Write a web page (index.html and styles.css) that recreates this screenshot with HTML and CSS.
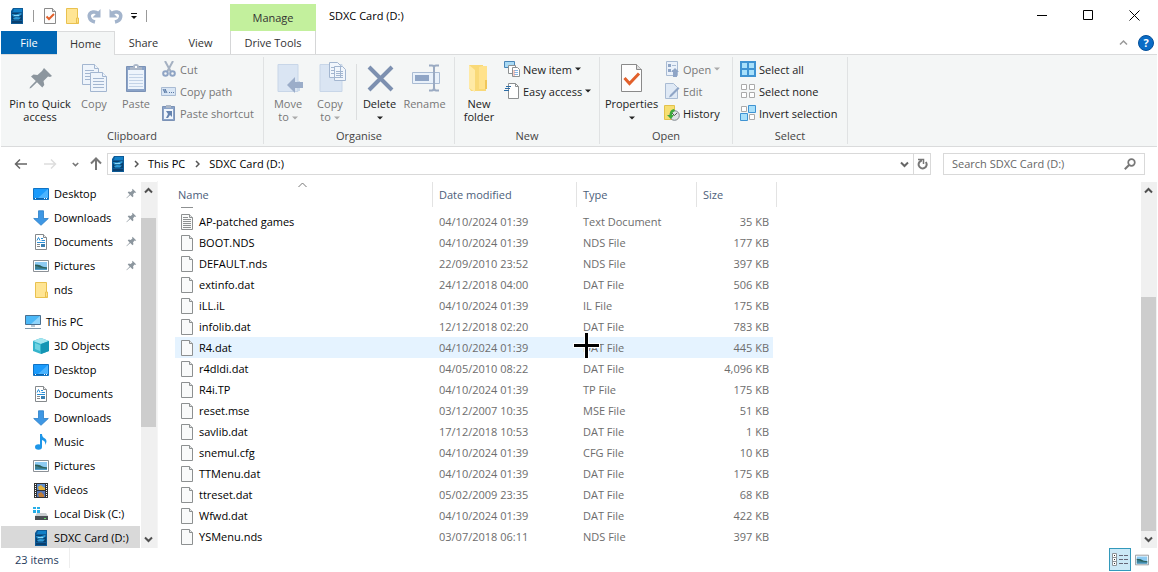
FILE: index.html
```html
<!DOCTYPE html>
<html lang="en">
<head>
  <meta charset="UTF-8" />
  <meta name="viewport" content="width=device-width, initial-scale=1.0"/>
  <title>SDXC Card (D:)</title>
  <link rel="stylesheet" href="styles.css">
</head>

<body>
  <!-- Icons used more than once -->
  <svg class="sprite" aria-hidden="true">
    <symbol id="i-sd" viewBox="0 0 16 16">
      <path d="M4 0h10v16H2V3z" fill="#0d5a96"/>
      <path d="M5 1h8v3H4z" fill="#1180c8"/>
      <path d="M3 5h10v7H3z" fill="#07406f"/>
      <path d="M3 6l4 .5L12 5l1 1-3 2.500H4zM4 10l3-1 5 .5-2 2H5z" fill="#2f9bd8"/>
      <path d="M5 7h5v1H5z" fill="#8bd8fa"/>
      <path d="M3 13h10v2H3z" fill="#0a3f6e"/>
    </symbol>
    <symbol id="i-folder" viewBox="0 0 16 16">
      <path d="M2.500.5h11v11h1v4h-12z" fill="#ffe594" stroke="#e9c14f"/>
      <path d="M12.500 15v-5h2v5z" fill="#ffe08a" stroke="#e9c14f"/>
    </symbol>
    <symbol id="i-check" viewBox="0 0 16 16">
      <path d="M2.500.5h8l3 3v12h-11z" fill="#fcfcfc" stroke="#8a8a8a"/>
      <path d="M10.500.5v3h3" fill="#ddd" stroke="#8a8a8a"/>
      <path d="M4.500 8.500l2.500 2.500 5-5" fill="none" stroke="#e2602b" stroke-width="2"/>
    </symbol>
    <symbol id="i-pin" viewBox="0 0 16 16">
      <path d="M9.500 1l5.500 5.500-1.500.5-1-.3-2.200 2.500.5 2.800-1.300 1.500-3.300-3.300L1 15l-.5-.5L5.300 9.300 2.500 6.500 4 5.200l2.800.5 2.500-2.200L9 2.300z" fill="#8c969e"/>
    </symbol>
    <symbol id="i-desktop" viewBox="0 0 16 16">
      <path d="M.5 2.500h15v11H.5z" fill="#1a9bfc" stroke="#1073c4"/>
      <path d="M15 3v9L5 12z" fill="#4bb4ff"/>
      <path d="M1 12h14v1H1z" fill="#0d64ad"/>
      <path d="M2 12h1v1H2zM11 12h1v1h-1zM13 12h1v1h-1z" fill="#fff"/>
    </symbol>
    <symbol id="i-down" viewBox="0 0 16 16">
      <path d="M5.500.8h5v7.700h4.800L8 15.300.7 8.500h4.800z" fill="#3e97e4" stroke="#2a7dc8" stroke-width=".8"/>
    </symbol>
    <symbol id="i-docs" viewBox="0 0 16 16">
      <path d="M2.500.5h8l3 3v12h-11z" fill="#fff" stroke="#85898c"/>
      <path d="M10.500.5v3h3" fill="#eee" stroke="#85898c"/>
      <path d="M4 6.500L5.500 3.500 7 6.500M4 8.500h8M8.500 6.500H12M8 4.500h2" stroke="#2a8ed6" fill="none"/>
      <path d="M4 10.500h3M4 12.500h3" stroke="#85898c"/>
      <path d="M8 10h4v3H8z" fill="#3a7fb0"/>
    </symbol>
    <symbol id="i-pics" viewBox="0 0 16 16">
      <path d="M.5 2.500h15v11H.5z" fill="#fff" stroke="#8c9196"/>
      <path d="M2 4h12v8H2z" fill="#8ecbf2"/>
      <path d="M2 7q5-1 7 1.500l5 1V12H2z" fill="#3b7f94"/>
      <path d="M2 8q3 0 5 1.500l7 1V9.500L10 9l-4-2-4-.5z" fill="#2d5f58"/>
      <path d="M2 11h12v1H2z" fill="#4d9cca"/>
    </symbol>
    <symbol id="i-file" viewBox="0 0 16 18">
      <path d="M2.500 1.500h8l3 3v12h-11z" fill="#f9fafa" stroke="#8d9091"/>
      <path d="M10.500 1.500v3h3" fill="#e4e6e7" stroke="#8d9091"/>
    </symbol>
    <symbol id="i-up" viewBox="0 0 9 9">
      <path d="M1 6.500L4.500 3 8 6.500" fill="none" stroke="currentColor" stroke-width="2"/>
    </symbol>
    <symbol id="i-dn" viewBox="0 0 9 9">
      <path d="M1 2.500L4.500 6 8 2.500" fill="none" stroke="currentColor" stroke-width="2"/>
    </symbol>
    <symbol id="i-tri" viewBox="0 0 6 4"><path d="M0 .5h6L3 3.500z" fill="currentColor"/></symbol>
  </svg>

  <!-- Title bar -->
  <header class="titlebar">
    <div class="quick">
      <svg class="ico"><use href="#i-sd"/></svg>
      <span class="bar"></span>
      <button aria-label="Properties"><svg class="ico"><use href="#i-check"/></svg></button>
      <button aria-label="New folder"><svg class="ico"><use href="#i-folder"/></svg></button>
      <button aria-label="Redo"><svg class="ico" viewBox="0 0 16 16"><path d="M9 14C2.500 12.500 1 5 7 4q3-.5 5 1.500" fill="none" stroke="#a3b4cc" stroke-width="3.500"/><path d="M14.500 1v8.500H6.500z" fill="#a3b4cc"/></svg></button>
      <button aria-label="Undo"><svg class="ico" viewBox="0 0 16 16"><path d="M7 14C13.500 12.500 15 5 9 4Q6 3.500 4 5.500" fill="none" stroke="#a3b4cc" stroke-width="3.500"/><path d="M1.500 1v8.500h8z" fill="#a3b4cc"/></svg></button>
      <button aria-label="Customise Quick Access Toolbar"><svg width="8" height="8" viewBox="0 0 8 8"><path d="M1 1.500h6" stroke="#111"/><path d="M1 4h6L4 7z" fill="#111"/></svg></button>
      <span class="bar"></span>
    </div>
    <div class="manage">Manage</div>
    <h1>SDXC Card (D:)</h1>
    <div class="win">
      <button aria-label="Minimise"><svg width="11" height="11" viewBox="0 0 11 11"><path d="M0 5.500h10" stroke="#000"/></svg></button>
      <button aria-label="Maximise"><svg width="11" height="11" viewBox="0 0 11 11"><path d="M.5.5h9v9h-9z" fill="none" stroke="#000"/></svg></button>
      <button aria-label="Close"><svg width="11" height="11" viewBox="0 0 11 11"><path d="M.5.5l10 10M10.500.5l-10 10" stroke="#000"/></svg></button>
    </div>
  </header>

  <nav class="tabs">
    <button class="file">File</button>
    <button class="on">Home</button>
    <button>Share</button>
    <button>View</button>
    <button class="drive">Drive Tools</button>
    <div class="help">
      <button aria-label="Minimise the Ribbon"><svg width="9" height="9" viewBox="0 0 9 9"><path d="M1 6.500L4.500 3 8 6.500" fill="none" stroke="#999" stroke-width="1.500"/></svg></button>
      <button class="round" aria-label="Help">?</button>
    </div>
  </nav>

  <!-- Ribbon -->
  <section class="ribbon">
    <div class="group clipboard">
      <div class="tools">
        <button class="big pin"><svg viewBox="0 0 32 32"><path d="M20 6l8 8-2 1-2-.5-4.500 4.500.8 4-2 2.500-5.300-5.300L7 26l-1.500.5L6 25l5.800-6L7 14.500 9.500 12.500l4 .5L18 9z" fill="#8c969e"/></svg>Pin to Quick<br>access</button>
        <button class="big copy dim"><svg viewBox="0 0 32 32"><g fill="#eef4fb" stroke="#a3b6d0"><path d="M4.500 2.500h12l4 4v16h-16z"/><path d="M16.500 2.500v4h4M7 8.500h9M7 11.500h9M7 14.500h9M7 17.500h9"/><path d="M12.500 10.500h12l4 4v15h-16z"/><path d="M24.500 10.500v4h4M15 16.500h11M15 19.500h11M15 22.500h11M15 25.500h11"/></g></svg>Copy</button>
        <button class="big paste dim"><svg viewBox="0 0 32 32"><path d="M6.500 4.500h19v25h-19z" fill="#8aa3c8" stroke="#7b92b6"/><path d="M8 8h16v19H8z" fill="#edf4fc"/><path d="M9 12.500h14M9 15.500h14M9 18.500h14M9 21.500h14M9 24.500h14" stroke="#c3d3e7"/><path d="M10 8V5h3q0-3 3-3t3 3h3v3z" fill="#aab6c7"/><path d="M15 4h2v2h-2z" fill="#fff"/></svg>Paste</button>
        <div class="stack dim">
          <button><svg class="ico" viewBox="0 0 16 16"><path d="M4 0l6 11M12 0L6 11" stroke="#a5b1c2" stroke-width="2"/><circle cx="4.500" cy="12.500" r="2.300" fill="none" stroke="#8fa4c4" stroke-width="2"/><circle cx="11.500" cy="12.500" r="2.300" fill="none" stroke="#8fa4c4" stroke-width="2"/></svg>Cut</button>
          <button><svg class="ico" viewBox="0 0 16 16"><path d="M.5 4.500h14v8H.5z" fill="#d9e6f5" stroke="#a9bbd3"/><path d="M2 6l2 4V6l2 4M8 9.500h1M10 9.500h1M12 9.500h1" fill="none" stroke="#5878a4"/></svg>Copy path</button>
          <button><svg class="ico" viewBox="0 0 16 16"><path d="M1.500 1.500h12v14h-12z" fill="#8aa3c8" stroke="#7b92b6"/><path d="M3 4h9v10H3z" fill="#f1f6fc"/><path d="M5 0h5v3H5z" fill="#aab6c7"/><path d="M5 6h6v6L9 10l-2 3H5l2-4z" fill="#6684b0"/></svg>Paste shortcut</button>
        </div>
      </div>
      <h2>Clipboard</h2>
    </div>
    <div class="group organise">
      <div class="tools">
        <button class="big move dim"><svg viewBox="0 0 32 32"><path d="M6 2.500h20v27H6z" fill="#dae5f3" stroke="#c8d6e8"/><path d="M25 19h3v10h-3z" fill="#cbdaeb"/><path d="M15 23l8-8v5h8v6h-8v5z" fill="#9badc9"/></svg>Move<br><span>to <svg class="tri"><use href="#i-tri"/></svg></span></button>
        <button class="big copyto dim"><svg viewBox="0 0 32 32"><path d="M6 2.500h22v27H6z" fill="#dae5f3" stroke="#c8d6e8"/><g fill="#f1f6fc" stroke="#a3b6d0"><path d="M15.500.5h8l3 3v12h-11zM20.500 4.500h8l3 3v11h-11z"/><path d="M22 9.500h7M22 11.500h7M22 13.500h7M22 15.500h7M17 5.500h3M17 8.500h3M17 11.500h3"/></g></svg>Copy<br><span>to <svg class="tri"><use href="#i-tri"/></svg></span></button>
        <span class="sep"></span>
        <button class="big delete"><svg viewBox="0 0 32 32"><path d="M5 5l23 23M28 5L5 28" stroke="#7d90b0" stroke-width="4"/></svg>Delete<br><span><svg class="tri"><use href="#i-tri"/></svg></span></button>
        <button class="big rename dim"><svg viewBox="0 0 32 32"><path d="M3.500 10.500h27v11h-27z" fill="#e9f1fa" stroke="#a9bbd3"/><path d="M6 13h14v6H6z" fill="#8fa5c6"/><path d="M20 3.500h3q2 0 2 2v20q0 3-2 3h-3M30 3.500h-3q-2 0-2 2v20q0 3 2 3h3" fill="none" stroke="#9aaac2" stroke-width="2"/></svg>Rename</button>
      </div>
      <h2>Organise</h2>
    </div>
    <div class="group new">
      <div class="tools">
        <button class="big folder"><svg viewBox="0 0 32 32"><path d="M6 3h14v9l3 3v14H8l-2-3z" fill="#f9d978"/><path d="M19 4h5v23h-8V5z" fill="#ffe28c"/><path d="M6 3l6 5v22l-6-4z" fill="#ffeaa6"/><path d="M22 18h2v9h-2z" fill="#f0c65a"/></svg>New<br>folder</button>
        <div class="stack">
          <button><svg class="ico" viewBox="0 0 16 16"><path d="M.5.5h10v6H.5z" fill="#a9daf5" stroke="#4a86b8"/><path d="M4.500 4.500h7v8h-7z" fill="#fff" stroke="#8d9091"/><path d="M8.500 6.500h5l2 2v7h-7z" fill="#fff" stroke="#8d9091"/><path d="M10 9.500h4M10 11.500h4M10 13.500h4" stroke="#87b7e6"/><path d="M10 9v6" stroke="#ef9a8a"/></svg>New item <svg class="tri"><use href="#i-tri"/></svg></button>
          <button><svg class="ico" viewBox="0 0 16 16"><path d="M4.500.5h7l3 3v12h-10z" fill="#fff" stroke="#8d9091"/><path d="M11.500.5v3h3" fill="none" stroke="#8d9091"/><path d="M2 3.500h5M1 5.500h5M0 7.500h5" stroke="#2d6da6"/></svg>Easy access <svg class="tri"><use href="#i-tri"/></svg></button>
        </div>
      </div>
      <h2>New</h2>
    </div>
    <div class="group open">
      <div class="tools">
        <button class="big props"><svg viewBox="0 0 32 32"><path d="M5.500 2.500h15l5 5v22h-20z" fill="#fdfdfd" stroke="#8a8a8a"/><path d="M20.500 2.500v5h5" fill="#ddd" stroke="#8a8a8a"/><path d="M8.500 16l5 5.500 9.500-10" fill="none" stroke="#e2602b" stroke-width="3"/></svg>Properties<br><span><svg class="tri"><use href="#i-tri"/></svg></span></button>
        <div class="stack">
          <button class="dim"><svg class="ico" viewBox="0 0 16 16"><path d="M2.500.5h11v14h-11z" fill="#eaf1fa" stroke="#a9bbd3"/><path d="M4 3h3v3H4zM4 8h3v3H4z" fill="#8fa5c6"/><path d="M8 4.500h4M8 9.500h3" stroke="#a9bbd3"/><path d="M11 7l4 4h-2v5h-4v-5H7z" fill="#8fa5c6"/></svg>Open <svg class="tri"><use href="#i-tri"/></svg></button>
          <button class="dim"><svg class="ico" viewBox="0 0 16 16"><path d="M1.500.5h8l4 4v11h-12z" fill="#dfe9f5" stroke="#a9bbd3"/><path d="M14 4l1.500 1.500-8 8-2.500 1 1-2.500z" fill="#8fa5c6"/></svg>Edit</button>
          <button><svg class="ico" viewBox="0 0 16 16"><path d="M.5.5h10v14H.5z" fill="#f7df72" stroke="#e3c24c"/><circle cx="10.500" cy="10.500" r="4.800" fill="#dfe3e6" stroke="#7f868c"/><path d="M8 8l2.500 2.500L13 8" fill="none" stroke="#555"/><path d="M10 4Q5 5 6 10H3l4 4 3-4H8Q8 7 11 6z" fill="#3da93d"/></svg>History</button>
        </div>
      </div>
      <h2>Open</h2>
    </div>
    <div class="group select">
      <div class="tools">
        <div class="stack">
          <button><svg class="ico" viewBox="0 0 16 16"><path d="M1 1h14v14H1z" fill="#a8e0fb" stroke="#3f93d2" stroke-width="2"/><path d="M8 0v16M0 8h16" stroke="#3f93d2" stroke-width="2"/></svg>Select all</button>
          <button><svg class="ico" viewBox="0 0 16 16"><path d="M1.500 1.500h5v5h-5zM9.500 1.500h5v5h-5zM1.500 9.500h5v5h-5zM9.500 9.500h5v5h-5z" fill="#fff" stroke="#aaa"/></svg>Select none</button>
          <button><svg class="ico" viewBox="0 0 16 16"><path d="M1.500 1.500h5v5h-5zM9.500 9.500h5v5h-5z" fill="#fff" stroke="#aaa"/><path d="M8.500.5h7v7h-7zM.5 8.500h7v7h-7z" fill="#a8e0fb" stroke="#3f93d2"/></svg>Invert selection</button>
        </div>
      </div>
      <h2>Select</h2>
    </div>
  </section>

  <!-- Address bar -->
  <div class="address">
    <div class="arrows">
      <button aria-label="Back"><svg width="14" height="12" viewBox="0 0 14 12"><path d="M6 1.500L1.500 6 6 10.500M2 6h11" fill="none" stroke="#666" stroke-width="1.500"/></svg></button>
      <button aria-label="Forward"><svg width="14" height="12" viewBox="0 0 14 12"><path d="M8 1.500l4.500 4.500L8 10.500M12 6H1" fill="none" stroke="#ddd" stroke-width="1.500"/></svg></button>
      <button class="recent" aria-label="Recent locations"><svg width="7" height="7"><use href="#i-dn"/></svg></button>
      <button aria-label="Up"><svg width="12" height="14" viewBox="0 0 12 14"><path d="M1 6.500L6 1.500l5 5M6 2v11" fill="none" stroke="#777" stroke-width="2"/></svg></button>
    </div>
    <div class="path">
      <svg class="ico"><use href="#i-sd"/></svg>
      <svg class="chev" viewBox="0 0 5 8"><path d="M1 1l3 3-3 3" fill="none" stroke="#555" stroke-width="1.500"/></svg>
      <a href="#">This PC</a>
      <svg class="chev" viewBox="0 0 5 8"><path d="M1 1l3 3-3 3" fill="none" stroke="#555" stroke-width="1.500"/></svg>
      <a href="#">SDXC Card (D:)</a>
      <button class="drop" aria-label="Previous locations"><svg width="9" height="9"><use href="#i-dn"/></svg></button>
      <button class="refresh" aria-label="Refresh"><svg width="11" height="12" viewBox="0 0 11 12"><path d="M8.800 4A4 4 0 1 1 5 2.500" fill="none" stroke="#777" stroke-width="2"/><path d="M1 1.500h5.500V6" fill="none" stroke="#777" stroke-width="1.500"/></svg></button>
    </div>
    <div class="search">
      <input type="search" placeholder="Search SDXC Card (D:)" aria-label="Search SDXC Card (D:)">
      <svg width="12" height="12" viewBox="0 0 12 12"><circle cx="7.500" cy="4.500" r="3.300" fill="none" stroke="#777" stroke-width="1.700"/><path d="M5 7L.8 11.200" stroke="#777" stroke-width="2"/></svg>
    </div>
  </div>

  <main>
    <nav class="tree">
      <a href="#"><svg class="ico"><use href="#i-desktop"/></svg>Desktop<svg class="pinned"><use href="#i-pin"/></svg></a>
      <a href="#"><svg class="ico"><use href="#i-down"/></svg>Downloads<svg class="pinned"><use href="#i-pin"/></svg></a>
      <a href="#"><svg class="ico"><use href="#i-docs"/></svg>Documents<svg class="pinned"><use href="#i-pin"/></svg></a>
      <a href="#"><svg class="ico"><use href="#i-pics"/></svg>Pictures<svg class="pinned"><use href="#i-pin"/></svg></a>
      <a href="#"><svg class="ico"><use href="#i-folder"/></svg>nds</a>
      <a href="#" class="pc"><svg class="ico" viewBox="0 0 16 16"><path d="M.5 1.500h15v9H.5z" fill="#4bb8f7" stroke="#4a6f8f"/><path d="M15 2v8H6z" fill="#8fd4fb"/><path d="M6 11h4v2H6z" fill="#b8c8d4"/><path d="M0 14.500h16" stroke="#7f98ab"/></svg>This PC</a>
      <a href="#"><svg class="ico" viewBox="0 0 16 16"><path d="M0 3l8-3 8 3v10l-8 3-8-3z" fill="#35b4cc"/><path d="M0 3l8-3 8 3-8 3z" fill="#a5e6f0"/><path d="M8 6l8-3v10l-8 3z" fill="#1595b4"/><path d="M2 5l5 2v6l-5-2z" fill="#6fd3e2"/></svg>3D Objects</a>
      <a href="#"><svg class="ico"><use href="#i-desktop"/></svg>Desktop</a>
      <a href="#"><svg class="ico"><use href="#i-docs"/></svg>Documents</a>
      <a href="#"><svg class="ico"><use href="#i-down"/></svg>Downloads</a>
      <a href="#"><svg class="ico" viewBox="0 0 16 16"><ellipse cx="5.500" cy="13" rx="3.500" ry="2.700" fill="#1e96e8"/><path d="M7 0h2q0 3 3 4.500 3 2 0 6.500 1-4-3-5v7H7z" fill="#1e96e8"/></svg>Music</a>
      <a href="#"><svg class="ico"><use href="#i-pics"/></svg>Pictures</a>
      <a href="#"><svg class="ico" viewBox="0 0 16 16"><path d="M1 1h14v15H1z" fill="#333"/><path d="M4 2h8v6H4z" fill="#5e8fd0"/><path d="M4 9h8v6H4z" fill="#5577b8"/><path d="M5 5l3-2 2 2 2 1v2H6z" fill="#e3b23c"/><path d="M5 12l3-2 3 3v2H6z" fill="#c07c35"/><path d="M2.500 2v14M13.500 2v14" stroke="#fff" stroke-dasharray="1 1"/></svg>Videos</a>
      <a href="#"><svg class="ico" viewBox="0 0 16 16"><path d="M0 1h3v2H0zM4 1h3v2H4zM0 4h3v3H0zM4 4h3v3H4z" fill="#27aee8"/><path d="M4 7h9l2 3H2z" fill="#c9cdd0"/><path d="M2 10h13v4H2z" fill="#4a4f54"/><path d="M11 12h2v1h-2z" fill="#5fe05f"/></svg>Local Disk (C:)</a>
      <a href="#" class="here"><svg class="ico"><use href="#i-sd"/></svg>SDXC Card (D:)</a>
    </nav>
    <div class="scroll left">
      <svg><use href="#i-up"/></svg><div class="thumb"></div><svg><use href="#i-dn"/></svg>
    </div>

    <div class="files">
      <table>
        <thead>
          <tr><th class="name">Name<svg class="sort" width="9" height="6" viewBox="0 0 9 6"><path d="M.5 5l4-4 4 4" fill="none" stroke="#777"/></svg></th><th class="date">Date modified</th><th class="type">Type</th><th class="size">Size</th></tr>
        </thead>
        <tbody>
          <tr class="cut"><td><svg viewBox="0 0 16 4"><path d="M2 .5h12" stroke="#8d9091"/></svg></td><td></td><td></td><td></td></tr>
          <tr><td><div><svg viewBox="0 0 16 18"><use href="#i-file"/><path d="M4 6.500h8M4 8.500h8M4 10.500h8M4 12.500h8M4 14.500h8M4 4.500h5" stroke="#8d9091"/></svg>AP-patched games</div></td><td>04/10/2024 01:39</td><td>Text Document</td><td>35 KB</td></tr>
          <tr><td><div><svg><use href="#i-file"/></svg>BOOT.NDS</div></td><td>04/10/2024 01:39</td><td>NDS File</td><td>177 KB</td></tr>
          <tr><td><div><svg><use href="#i-file"/></svg>DEFAULT.nds</div></td><td>22/09/2010 23:52</td><td>NDS File</td><td>397 KB</td></tr>
          <tr><td><div><svg><use href="#i-file"/></svg>extinfo.dat</div></td><td>24/12/2018 04:00</td><td>DAT File</td><td>506 KB</td></tr>
          <tr><td><div><svg><use href="#i-file"/></svg>iLL.iL</div></td><td>04/10/2024 01:39</td><td>IL File</td><td>175 KB</td></tr>
          <tr><td><div><svg><use href="#i-file"/></svg>infolib.dat</div></td><td>12/12/2018 02:20</td><td>DAT File</td><td>783 KB</td></tr>
          <tr class="hover"><td><div><svg><use href="#i-file"/></svg>R4.dat</div></td><td>04/10/2024 01:39</td><td>DAT File<svg class="cursor" viewBox="0 0 27 27"><path d="M13.500 0v27M0 13.500h27" stroke="#fff" stroke-width="5"/><path d="M13.500 1v25M1 13.500h25" stroke="#000" stroke-width="3"/></svg></td><td>445 KB</td></tr>
          <tr><td><div><svg><use href="#i-file"/></svg>r4dldi.dat</div></td><td>04/05/2010 08:22</td><td>DAT File</td><td>4,096 KB</td></tr>
          <tr><td><div><svg><use href="#i-file"/></svg>R4i.TP</div></td><td>04/10/2024 01:39</td><td>TP File</td><td>175 KB</td></tr>
          <tr><td><div><svg><use href="#i-file"/></svg>reset.mse</div></td><td>03/12/2007 10:35</td><td>MSE File</td><td>51 KB</td></tr>
          <tr><td><div><svg><use href="#i-file"/></svg>savlib.dat</div></td><td>17/12/2018 10:53</td><td>DAT File</td><td>1 KB</td></tr>
          <tr><td><div><svg><use href="#i-file"/></svg>snemul.cfg</div></td><td>04/10/2024 01:39</td><td>CFG File</td><td>10 KB</td></tr>
          <tr><td><div><svg><use href="#i-file"/></svg>TTMenu.dat</div></td><td>04/10/2024 01:39</td><td>DAT File</td><td>175 KB</td></tr>
          <tr><td><div><svg><use href="#i-file"/></svg>ttreset.dat</div></td><td>05/02/2009 23:35</td><td>DAT File</td><td>68 KB</td></tr>
          <tr><td><div><svg><use href="#i-file"/></svg>Wfwd.dat</div></td><td>04/10/2024 01:39</td><td>DAT File</td><td>422 KB</td></tr>
          <tr><td><div><svg><use href="#i-file"/></svg>YSMenu.nds</div></td><td>03/07/2018 06:11</td><td>NDS File</td><td>397 KB</td></tr>
        </tbody>
      </table>
    </div>
    <div class="scroll right">
      <svg><use href="#i-up"/></svg><div class="thumb"></div><svg><use href="#i-dn"/></svg>
    </div>
  </main>

  <footer>
    <span class="count">23 items</span>
    <div class="views">
      <button class="on" aria-label="Details"><svg width="18" height="14" viewBox="0 0 18 14"><path d="M1.500.5h4v12h-4zM1.500 4.500h4M1.500 8.500h4" fill="#fff" stroke="#8c9196"/><path d="M3 2.500h1M3 6.500h1M3 10.500h1" stroke="#333"/><path d="M8 2.500h4M13 2.500h4M8 6.500h4M13 6.500h4M8 10.500h4M13 10.500h4" stroke="#667"/></svg></button>
      <button aria-label="Large icons"><svg width="14" height="14" viewBox="0 0 16 16"><use href="#i-pics"/></svg></button>
    </div>
  </footer>
</body>
</html>
```
FILE: styles.css
```css
* {
  box-sizing: border-box;
}
body {
  margin: 0;
  padding: 0 1px;
  height: 100vh;
  display: flex;
  flex-direction: column;
  overflow: hidden;
  background: #fff;
  color: #000;
  font-family: 'Open Sans', 'Noto Sans', sans-serif;
  font-size: 11px;
}
button {
  margin: 0;
  padding: 0;
  border: none;
  background: none;
  color: inherit;
  font: inherit;
}
a {
  color: inherit;
  text-decoration: none;
}
svg {
  display: block;
  flex: none;
}
h1, h2 {
  margin: 0;
  font-size: 11px;
  font-weight: normal;
}
.sprite {
  position: absolute;
  width: 0;
  height: 0;
}
.ico {
  width: 16px;
  height: 16px;
}
.tri {
  display: inline-block;
  width: 6px;
  height: 4px;
  vertical-align: middle;
}

/* Title bar */
.titlebar {
  display: flex;
  height: 31px;
}
.quick {
  display: flex;
  align-items: center;
  width: 229px;
  gap: 6px;
  padding-left: 8px;
}
.quick .bar {
  width: 1px;
  height: 12px;
  margin: 0 2px;
  background: #999;
}
.manage {
  display: flex;
  align-items: center;
  justify-content: center;
  width: 86px;
  margin-top: 4px;
  background: #c3f09d;
  color: #333;
}
.titlebar h1 {
  margin-left: 13px;
  line-height: 32px;
}
.win {
  display: flex;
  margin-left: auto;
}
.win button {
  display: flex;
  align-items: center;
  justify-content: center;
  width: 46px;
}

/* Tabs */
.tabs {
  display: flex;
  height: 24px;
  border-bottom: 1px solid #dadbdc;
  color: #333;
}
.tabs button {
  width: 57px;
}
.tabs .file {
  width: 56px;
  background: #0066b4;
  color: #fff;
}
.tabs .on {
  width: 58px;
  height: 24px;
  border: 1px solid #dadbdc;
  border-width: 1px 1px 0 0;
  background: #f4f6f6;
}
.tabs .drive {
  width: 86px;
  margin-left: 1px;
  border: 1px solid #d5d6d7;
  border-width: 0 1px;
}
.help {
  display: flex;
  align-items: center;
  gap: 10px;
  margin-left: auto;
  padding-right: 3px;
}
.help button {
  width: auto;
}
.help .round {
  width: 16px;
  height: 16px;
  border: 1px solid #05509a;
  border-radius: 50%;
  background: #0a6cc6;
  color: #fff;
  font-weight: bold;
  line-height: 14px;
}

/* Ribbon */
.ribbon {
  display: grid;
  grid-template-columns: 263px 191px 145px 133px 115px 1fr;
  height: 92px;
  padding: 2px 0;
  border-bottom: 1px solid #dadbdc;
  background: #f4f6f6;
  color: #222;
}
.group {
  display: flex;
  flex-direction: column;
  border-right: 1px solid #e0e2e3;
}
.group h2 {
  line-height: 16px;
  color: #444;
  text-align: center;
}
.tools {
  display: flex;
  flex: 1;
}
.big {
  display: block;
  line-height: 13px;
  padding-top: 5px;
  white-space: nowrap;
  align-self: flex-start;
}
.big > svg {
  width: 32px;
  height: 32px;
  margin: 0 auto 3px;
}
.dim {
  color: #777;
}
.dim .tri {
  color: #aaa;
}
.pin {
  width: 72px;
  margin-left: 3px;
}
.copy, .copyto {
  width: 36px;
}
.paste, .move, .folder {
  width: 48px;
}
.delete, .rename {
  width: 45px;
}
.props {
  width: 63px;
}
.sep {
  width: 1px;
  height: 56px;
  margin: 7px 0 0 8px;
  background: #dcdedf;
}
.stack {
  padding: 1px 0 0 1px;
}
.stack button {
  display: flex;
  align-items: center;
  gap: 3px;
  height: 22px;
  white-space: nowrap;
}
.select .stack {
  padding-left: 7px;
}

/* Address bar */
.address {
  display: flex;
  align-items: center;
  height: 34px;
  padding-right: 12px;
}
.arrows {
  display: flex;
  align-items: center;
  width: 106px;
  gap: 15px;
  padding-left: 13px;
}
.arrows .recent {
  margin-right: -4px;
  color: #777;
}
.path, .search {
  display: flex;
  align-items: center;
  height: 22px;
  border: 1px solid #d9d9d9;
}
.path {
  flex: 1;
  padding-left: 2px;
}
.path a {
  line-height: 14px;
  padding-bottom: 1px;
}
.path .chev {
  width: 5px;
  height: 8px;
  margin: 0 9px 0 8px;
}
.path a + .chev {
  margin: 0 9px 0 10px;
}
.path .drop {
  margin: 0 4px 0 auto;
  color: #666;
}
.path .refresh {
  display: flex;
  align-items: center;
  justify-content: center;
  width: 17px;
  height: 20px;
  border-left: 1px solid #d9d9d9;
}
.search {
  width: 202px;
  margin-left: 12px;
  padding: 0 8px;
}
.search input {
  flex: 1;
  min-width: 0;
  padding: 0 0 1px;
  border: none;
  outline: none;
  font: inherit;
}
.search input::placeholder {
  color: #666;
}

/* Body */
main {
  display: flex;
  flex: 1;
  min-height: 0;
}
.tree {
  width: 139px;
  padding-top: 1px;
  overflow: hidden;
}
.tree a {
  display: flex;
  align-items: center;
  gap: 5px;
  height: 24px;
  padding: 0 3px 1px 32px;
  white-space: nowrap;
}
.tree .pc {
  margin-top: 8px;
  padding-left: 24px;
}
.tree .here {
  background: #d9d9d9;
}
.pinned {
  width: 11px;
  height: 11px;
  margin-left: auto;
}
.scroll {
  display: grid;
  justify-items: center;
  align-items: center;
  width: 16px;
  margin-top: 1px;
  padding-right: 1px;
  background: #f0f0f0;
  color: #505050;
}
.scroll svg {
  width: 9px;
  height: 9px;
}
.scroll .thumb {
  width: 15px;
  height: 100%;
  grid-row: 3;
  background: #cdcdcd;
}
.scroll svg:last-child {
  grid-row: 5;
}
.left {
  grid-template-rows: 17px 19fr 209fr 104fr 17px;
  margin-left: 1px;
}
.right {
  grid-template-rows: 17px 98fr 234fr 0fr 17px;
}
.files {
  flex: 1;
  padding: 1px 0 0 17px;
  border-left: 1px solid #f5f5f5;
  overflow: hidden;
}
table {
  table-layout: fixed;
  width: 602px;
  border-spacing: 0;
}
th {
  position: relative;
  height: 25px;
  padding: 0 6px;
  border-right: 1px solid #e3e3e3;
  color: #4c607a;
  font-weight: normal;
  text-align: left;
}
.name {
  width: 258px;
  padding-left: 3px;
}
.date {
  width: 144px;
}
.type {
  width: 120px;
}
.size {
  width: 80px;
}
.sort {
  position: absolute;
  top: 0;
  left: 50%;
  margin-left: -6px;
}
td {
  height: 21px;
  padding: 0 6px;
  color: #6d6d6d;
  white-space: nowrap;
}
td:first-child {
  padding-left: 4px;
  color: #000;
}
td:last-child {
  padding-right: 4px;
  border-right: 4px solid transparent;
  background-clip: padding-box;
  text-align: right;
}
td div {
  display: flex;
  align-items: center;
  gap: 4px;
}
td svg {
  width: 16px;
  height: 18px;
}
.cut td, .cut svg {
  height: 4px;
}
.hover td {
  position: relative;
  background-color: #e5f3ff;
}
.hover .cursor {
  position: absolute;
  top: -5px;
  left: -4px;
  width: 27px;
  height: 27px;
  z-index: 1;
}

/* Status bar */
footer {
  display: flex;
  justify-content: space-between;
  height: 24px;
  color: #1e395b;
}
.count {
  height: 20px;
  padding: 0 10px 0 14px;
  border-right: 1px solid #eee;
  line-height: 24px;
}
.views {
  display: flex;
  gap: 4px;
  padding-right: 8px;
}
.views .on {
  width: 22px;
  height: 23px;
  padding-left: 1px;
  border: 1px solid #3399bb;
  background: #cce8f6;
}
```
